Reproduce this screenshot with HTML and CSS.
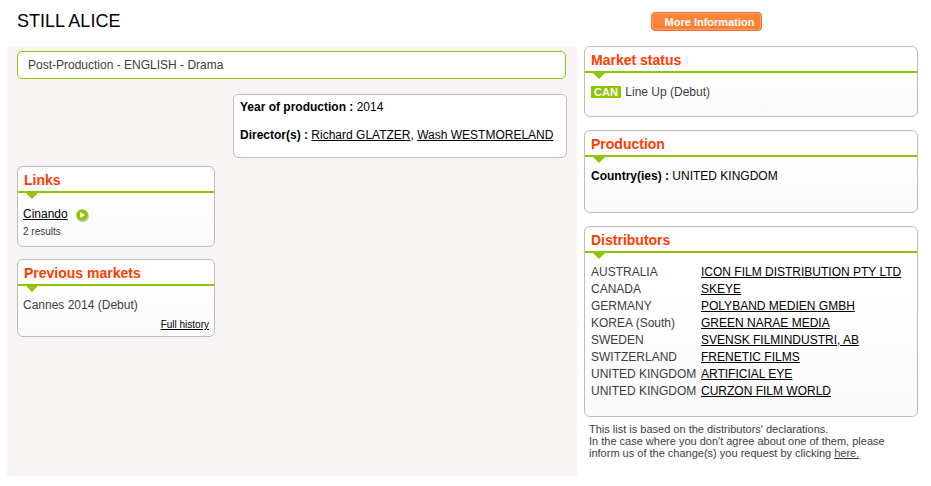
FILE: index.html
```html
<!DOCTYPE html>
<html lang="en">
<head>
<meta charset="utf-8">
<title>STILL ALICE</title>
<link rel="stylesheet" href="styles.css">
</head>
<body>
<header class="top">
  <h1 class="title">STILL ALICE</h1>
  <a class="more" href="#">More Information</a>
</header>
<div class="columns">
  <main class="left">
    <div class="banner">Post-Production - ENGLISH - Drama</div>
    <div class="info">
      <p class="info-line"><b>Year of production :</b> 2014</p>
      <p class="info-line"><b>Director(s) :</b> <a href="#">Richard GLATZER</a>, <a href="#">Wash WESTMORELAND</a></p>
    </div>
    <section class="box box-links">
      <h2 class="box-title">Links</h2>
      <div class="box-body links-body">
        <div class="cinando"><a href="#">Cinando</a>
          <svg class="play" width="14" height="14" viewBox="0 0 14 14" aria-hidden="true"><circle cx="7" cy="7.2" r="6" fill="#c9c9c9"/><circle cx="6" cy="6" r="5.8" fill="#8fc400"/><path d="M4.2 3 9.2 6 4.2 9z" fill="#fff"/></svg>
        </div>
        <div class="small">2 results</div>
      </div>
    </section>
    <section class="box box-prev">
      <h2 class="box-title">Previous markets</h2>
      <div class="box-body prev-body">
        <div>Cannes 2014 (Debut)</div>
        <a class="history" href="#">Full history</a>
      </div>
    </section>
  </main>
  <aside class="right">
    <section class="box box-status">
      <h2 class="box-title">Market status</h2>
      <div class="box-body status-body"><span class="tag">CAN</span> Line Up (Debut)</div>
    </section>
    <section class="box box-production">
      <h2 class="box-title">Production</h2>
      <div class="box-body status-body production-body"><b>Country(ies) :</b> UNITED KINGDOM</div>
    </section>
    <section class="box box-dist">
      <h2 class="box-title">Distributors</h2>
      <div class="box-body dist-body">
        <span>AUSTRALIA</span><a href="#">ICON FILM DISTRIBUTION PTY LTD</a>
        <span>CANADA</span><a href="#">SKEYE</a>
        <span>GERMANY</span><a href="#">POLYBAND MEDIEN GMBH</a>
        <span>KOREA (South)</span><a href="#">GREEN NARAE MEDIA</a>
        <span>SWEDEN</span><a href="#">SVENSK FILMINDUSTRI, AB</a>
        <span>SWITZERLAND</span><a href="#">FRENETIC FILMS</a>
        <span>UNITED KINGDOM</span><a href="#">ARTIFICIAL EYE</a>
        <span>UNITED KINGDOM</span><a href="#">CURZON FILM WORLD</a>
      </div>
    </section>
    <p class="note">This list is based on the distributors' declarations.<br>In the case where you don't agree about one of them, please<br>inform us of the change(s) you request by clicking <a href="#">here.</a></p>
  </aside>
</div>
</body>
</html>
```
FILE: styles.css
```css
* { box-sizing: border-box; }
html, body { margin: 0; padding: 0; background: #fff; }
body {
  font-family: "Liberation Sans", Arial, sans-serif;
  font-size: 12px;
  line-height: 17px;
  color: #3c3c3c;
  height: 486px;
  overflow: hidden;
}
a { color: #000; text-decoration: underline; }
.top { height: 46px; display: flex; align-items: flex-start; padding-left: 17px; }
.title { margin: 11px 0 0; width: 634px; font-size: 18px; line-height: 21px; font-weight: 400; color: #000; }
.more {
  margin-top: 12px;
  width: 111px;
  height: 19px;
  border: 1px solid #f0702a;
  border-radius: 4px;
  background: #ff8238;
  box-shadow: inset 0 0 0 1px #ffa36e;
  color: #fff;
  font-size: 11px;
  line-height: 18px;
  font-weight: 700;
  text-align: center;
  text-decoration: none;
  padding-left: 6px;
}
.columns { display: flex; padding-left: 7px; }
.left { width: 570px; height: 430px; background: #f7f4f3; padding: 5px 10px 0; }
.right { width: 334px; margin-left: 7px; }
.banner {
  width: 549px;
  height: 28px;
  border: 1px solid #8fc400;
  border-radius: 5px;
  background: #fff;
  padding: 4px 10px;
  line-height: 18px;
}
.info {
  margin: 15px 0 0 216px;
  width: 334px;
  height: 64px;
  border: 1px solid #bdbdbd;
  border-radius: 5px;
  background: #fff;
  padding: 4px 6px;
  color: #000;
}
.info-line { margin: 0 0 11px; }
.box {
  border: 1px solid #bdbdbd;
  border-radius: 6px;
  background: linear-gradient(#fff 30%, #fafafa);
}
.box-title {
  position: relative;
  margin: 0;
  height: 26px;
  border-bottom: 2px solid #8fc400;
  padding: 3px 6px 0;
  color: #ff3c00;
  font-size: 14px;
  line-height: 20px;
  font-weight: 700;
}
.box-title::after {
  content: "";
  position: absolute;
  left: 8px;
  top: 26px;
  border-style: solid;
  border-width: 6px 6.5px 0;
  border-color: #8fc400 transparent transparent;
}
.box-links { width: 198px; height: 81px; margin-top: 8px; }
.box-prev { width: 198px; height: 78px; margin-top: 12px; }
.links-body { padding: 13px 5px 0; }
.cinando { display: flex; align-items: center; gap: 8px; }
.play { margin-top: 2px; }
.small { font-size: 10px; line-height: 12px; margin-top: 3px; }
.prev-body { padding: 11px 5px 0; }
.history { display: block; text-align: right; font-size: 10px; line-height: 12px; margin-top: 5px; }
.box-status { height: 71px; }
.box-production { height: 83px; margin-top: 13px; }
.box-dist { height: 191px; margin-top: 13px; }
.status-body { padding: 11px 6px 0; }
.production-body { color: #000; }
.tag {
  display: inline-block;
  width: 30px;
  height: 12px;
  background: #8fc400;
  color: #fff;
  font-size: 11px;
  line-height: 12px;
  font-weight: 700;
  text-align: center;
  margin-right: 1px;
}
.dist-body {
  display: grid;
  grid-template-columns: 110px auto;
  justify-content: start;
  padding: 11px 6px 0;
}
.dist-body a { justify-self: start; }
.note { margin: 6px 0 0 5px; font-size: 11px; line-height: 12px; }
.note a { color: #3c3c3c; }
```
